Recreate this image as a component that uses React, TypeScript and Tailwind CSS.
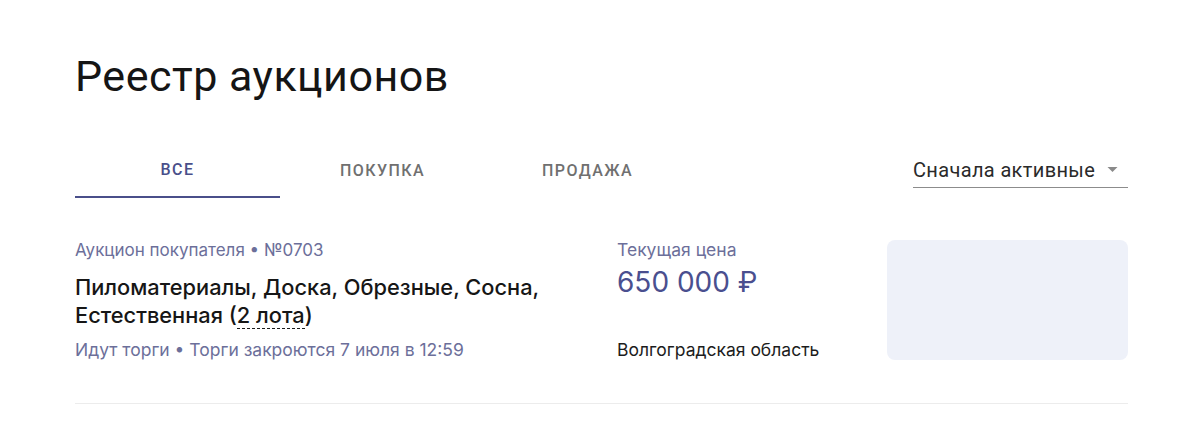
import React from "react";

export default function App() {
  return (
    <div className="w-[1200px] h-[422px] bg-white overflow-hidden" style={{ fontFamily: "Inter, 'Noto Sans', sans-serif" }}>
      <div className="ml-[75px] w-[1053px] pt-[52px]">
        <h1 className="text-[43px] leading-[48px] text-[#151515] font-normal font-['Roboto',sans-serif] tracking-[0.5px]">Реестр аукционов</h1>
        <div className="mt-[47px] flex items-start justify-between">
          <div className="flex font-['Roboto',sans-serif] text-[16px] font-medium tracking-[1.4px] uppercase">
            <div className="w-[205px] h-[51px] flex items-center justify-center border-b-2 border-[#4a4f8a] text-[#4a4f8a] pb-[4px]">Все</div>
            <div className="w-[205px] h-[51px] flex items-center justify-center text-[#707070] pb-[4px]">Покупка</div>
            <div className="w-[205px] h-[51px] flex items-center justify-center text-[#707070] pb-[4px]">Продажа</div>
          </div>
          <div className="w-[215px] h-[41px] flex items-center justify-between border-b border-[#8c8c8c] pt-[5px] font-['Roboto',sans-serif]">
            <span className="text-[20px] text-[#2a2a2a] tracking-[0.35px]">Сначала активные</span>
            <svg width="11" height="5" viewBox="0 0 10 5" className="mr-[10px]"><path d="M0 0h10L5 5z" fill="#8a8a8a" /></svg>
          </div>
        </div>
        <div className="mt-[41px] flex pb-[42px] border-b border-[#ececec]">
          <div className="w-[542px]">
            <div className="text-[17px] leading-[22px] text-[#6c6f9a]">Аукцион покупателя • №0703</div>
            <div className="mt-[12px] text-[21.8px] leading-[28px] font-medium text-[#161616]">
              Пиломатериалы, Доска, Обрезные, Сосна,<br />Естественная (<span className="border-b-[1.5px] border-dashed border-[#1c1c1c]">2 лота</span>)
            </div>
            <div className="mt-[10px] text-[17.5px] leading-[22px] text-[#6c6f9a]">Идут торги • Торги закроются 7 июля в 12:59</div>
          </div>
          <div className="w-[270px] flex flex-col">
            <div className="text-[17.5px] leading-[22px] text-[#6c6f9a]">Текущая цена</div>
            <div className="mt-[3px] text-[28px] leading-[36px] text-[#4a4f8f]">650 000 ₽</div>
            <div className="mt-auto text-[17.5px] leading-[22px] text-[#1c1c1c]">Волгоградская область</div>
          </div>
          <div className="w-[241px] h-[120px] mt-[1px] rounded-[8px] bg-[#eef1f9]"></div>
        </div>
      </div>
    </div>
  );
}
